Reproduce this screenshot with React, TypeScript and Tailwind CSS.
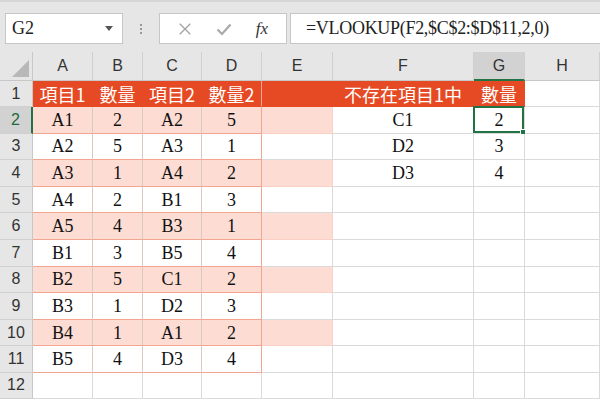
const cols = ["A", "B", "C", "D", "E", "F", "G", "H"]

const rows: string[][] = [
  ["項目1", "數量", "項目2", "數量2", "", "不存在項目1中", "數量", ""],
  ["A1", "2", "A2", "5", "", "C1", "2", ""],
  ["A2", "5", "A3", "1", "", "D2", "3", ""],
  ["A3", "1", "A4", "2", "", "D3", "4", ""],
  ["A4", "2", "B1", "3", "", "", "", ""],
  ["A5", "4", "B3", "1", "", "", "", ""],
  ["B1", "3", "B5", "4", "", "", "", ""],
  ["B2", "5", "C1", "2", "", "", "", ""],
  ["B3", "1", "D2", "3", "", "", "", ""],
  ["B4", "1", "A1", "2", "", "", "", ""],
  ["B5", "4", "D3", "4", "", "", "", ""],
  ["", "", "", "", "", "", "", ""],
]

const serif = "font-['Liberation_Serif','Noto_Sans_CJK_TC',serif]"
const sans = "font-['Liberation_Sans','Noto_Sans',sans-serif]"

function Cell({ r, c, v }: { r: number; c: number; v: string }) {
  const header = r === 0 && c <= 6
  const pink = r >= 1 && r <= 10 && r % 2 === 1 && c <= 4
  const inTable = r >= 1 && r <= 10 && c <= 3
  const selected = r === 1 && c === 6

  let cls = "relative flex items-center justify-center "
  if (header) {
    cls += "bg-[#e64a24] text-white font-['Noto_Sans_CJK_TC',serif] text-[18px] border-r border-[#e64a24] border-b border-b-[#e64a24] "
    if (c === 3) cls += "border-r-[#f5a48f] "
  } else {
    cls += pink ? "bg-[#fcdcd3] " : "bg-white "
    if (inTable) {
      cls += "border-b border-[#f2a591] "
      cls += c === 3 ? "border-r border-r-[#f2a591] " : "border-r border-r-[#dcc8c2] "
    } else if (pink && c === 4) {
      cls += "border-b border-r border-[#fbd0c5] "
    } else {
      cls += "border-b border-r border-[#dadada] "
    }
  }
  cls += r === 0 || r === 11 ? "h-[26px] " : "h-[26.6px] "

  return (
    <div className={cls}>
      <span className={header ? "leading-none" : serif + " text-[18px] text-[#111] leading-none"}>{v}</span>
      {selected && (
        <div className="absolute -left-px -top-px right-0 bottom-0 border-2 border-[#217346]">
          <div className="absolute -right-[4px] -bottom-[4px] w-[6px] h-[6px] bg-[#217346] border border-white" />
        </div>
      )}
    </div>
  )
}

function Row({ r, row }: { r: number; row: string[] }) {
  return (
    <>
      <div
        className={
          "flex items-center justify-center text-[16px] border-b border-[#d0d0d0] " +
          sans +
          (r === 0 || r === 11 ? " h-[26px]" : " h-[26.6px]") +
          (r === 1
            ? " bg-[#d2d2d2] text-[#1e6b3f] border-r-2 border-r-[#217346]"
            : " bg-[#e6e6e6] text-[#333] border-r border-r-[#c8c8c8]")
        }
      >
        {r + 1}
      </div>
      {row.map((v, c) => (
        <Cell key={c} r={r} c={c} v={v} />
      ))}
    </>
  )
}

export default function App() {
  return (
    <div className="w-[600px] h-[399px] overflow-hidden bg-[#e6e6e6]">
      <div className="h-[52px] border-t-2 border-[#d6d6d6] flex items-start pt-[11px] pl-[5px]">
        <div className="w-[118px] h-[31px] bg-white border border-[#c6c6c6] flex items-center justify-between pl-[6px] pr-[9px]">
          <span className={serif + " text-[18px] text-[#222]"}>G2</span>
          <svg viewBox="0 0 8 5" className="w-[8px] h-[5px]">
            <path d="M0 0H8L4 5Z" fill="#555" />
          </svg>
        </div>
        <div className="w-[36px] h-[31px] flex flex-col items-center justify-center gap-[2px]">
          <span className="w-[2px] h-[2px] bg-[#999]" />
          <span className="w-[2px] h-[2px] bg-[#999]" />
          <span className="w-[2px] h-[2px] bg-[#999]" />
        </div>
        <div className="w-[128px] h-[31px] bg-white border border-[#c6c6c6] flex items-center justify-around px-[6px]">
          <svg viewBox="0 0 16 16" className="w-[14px] h-[14px]">
            <path d="M2 2L14 14M14 2L2 14" stroke="#a0a0a0" strokeWidth="1.5" fill="none" />
          </svg>
          <svg viewBox="0 0 16 16" className="w-[16px] h-[16px]">
            <path d="M1.5 8.5L6 13L14.5 3.5" stroke="#a8a8a8" strokeWidth="2.2" fill="none" />
          </svg>
          <span className={serif + " italic text-[17px] text-[#333]"}>fx</span>
        </div>
        <div className="ml-[3px] flex-1 h-[31px] bg-white border border-[#c6c6c6] border-r-0 flex items-center pl-[15px]">
          <span className={serif + " text-[18px] text-[#222] tracking-[-0.3px]"}>=VLOOKUP(F2,$C$2:$D$11,2,0)</span>
        </div>
      </div>
      <div className="grid grid-cols-[33px_60px_50px_59px_60px_71px_141px_51px_1fr]">
        <div className="h-[29px] bg-[#e6e6e6] border-r border-b border-[#c8c8c8] relative">
          <svg viewBox="0 0 20 20" className="absolute right-[3px] bottom-[3px] w-[17px] h-[17px]">
            <path d="M20 0L20 20L0 20Z" fill="#b8b8b8" />
          </svg>
        </div>
        {cols.map((c, i) => (
          <div
            key={c}
            className={
              "h-[29px] flex items-center justify-center text-[16px] text-[#333] border-r border-[#d0d0d0] " +
              sans +
              (i === 6 ? " bg-[#d2d2d2] border-b-2 border-b-[#217346]" : " bg-[#e6e6e6] border-b border-b-[#c8c8c8]")
            }
          >
            {c}
          </div>
        ))}
        {rows.map((row, r) => (
          <Row key={r} r={r} row={row} />
        ))}
      </div>
    </div>
  )
}
